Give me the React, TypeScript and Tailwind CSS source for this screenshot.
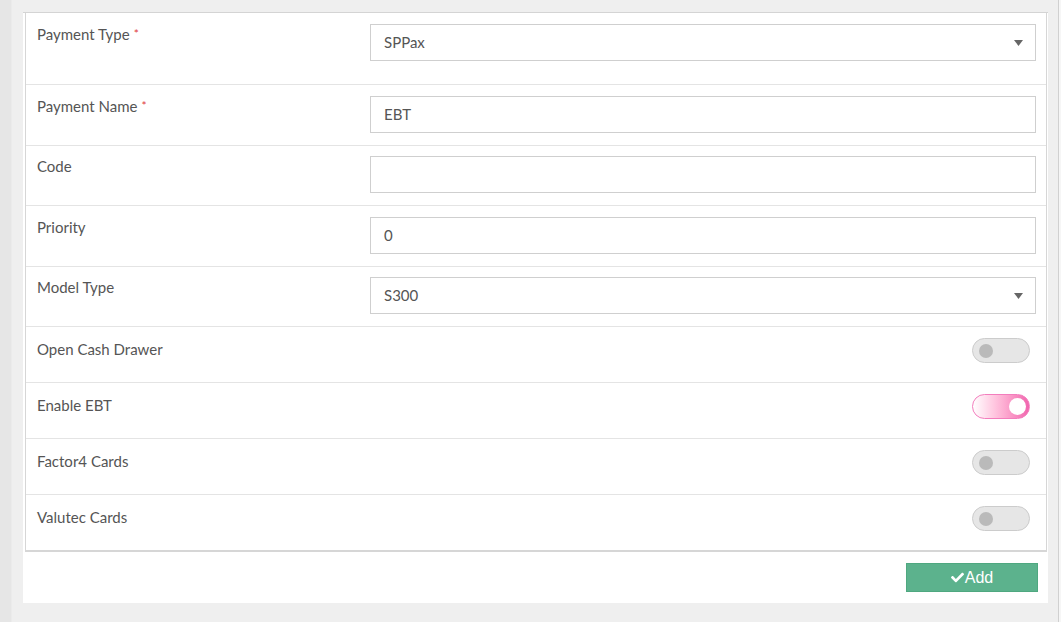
import { FaCheck } from 'react-icons/fa';

type FieldRow = {
  label: string;
  required?: boolean;
  value: string;
  select?: boolean;
  height: string;
  top: string;
};

const fieldRows: FieldRow[] = [
  { label: 'Payment Type', required: true, value: 'SPPax', select: true, height: 'h-[72px]', top: 'pt-[11px]' },
  { label: 'Payment Name', required: true, value: 'EBT', height: 'h-[61px]', top: 'pt-[11px]' },
  { label: 'Code', value: '', height: 'h-[60px]', top: 'pt-[10px]' },
  { label: 'Priority', value: '0', height: 'h-[61px]', top: 'pt-[11px]' },
  { label: 'Model Type', value: 'S300', select: true, height: 'h-[60px]', top: 'pt-[10px]' },
];

const toggleRows = [
  { label: 'Open Cash Drawer', on: false },
  { label: 'Enable EBT', on: true },
  { label: 'Factor4 Cards', on: false },
  { label: 'Valutec Cards', on: false },
];

function Toggle({ on }: { on: boolean }) {
  if (on) {
    return (
      <div className="w-[58px] h-[25px] rounded-full border border-[#f37dbd] bg-gradient-to-r from-white to-[#f064ae] flex items-center justify-end pr-[3px]">
        <div className="w-[17px] h-[17px] rounded-full bg-white" />
      </div>
    );
  }
  return (
    <div className="w-[58px] h-[25px] rounded-full border border-[#cccccc] bg-[#e6e6e6] flex items-center pl-[6px]">
      <div className="w-[14px] h-[14px] rounded-full bg-[#bababa]" />
    </div>
  );
}

export default function App() {
  return (
    <div
      className="w-[1061px] h-[622px] bg-[#efefef] flex text-[#555555]"
      style={{ fontFamily: 'Lato, "Open Sans", sans-serif' }}
    >
      <div className="w-[12px] h-full bg-[#e6e6e6] border-r border-[#ebebeb]" />
      <div className="w-[11px]" />
      <div className="mt-[12px] w-[1025px] h-[591px] bg-white border-t border-[#d4d4d4] flex flex-col">
        <div className="ml-[2px] w-[1022px] border-l border-r border-b-2 border-[#d6d6d6]">
          {fieldRows.map((row) => (
            <div
              key={row.label}
              className={`${row.height} ${row.top} flex border-b border-[#e4e4e4] pl-[11px]`}
            >
              <div className="w-[333px] text-[15px] leading-[22px] -mt-[1px]">
                {row.label}
                {row.required && <span className="text-[#e03a3a] text-[12px] align-top ml-[4px]">*</span>}
              </div>
              <div className="w-[666px] h-[37px] border border-[#cfcfcf] flex items-center justify-between pl-[13px] pr-[12px] text-[15px]">
                <span>{row.value}</span>
                {row.select && (
                  <svg width="9" height="6" viewBox="0 0 9 6">
                    <path d="M0 0 L9 0 L4.5 6 Z" fill="#666666" />
                  </svg>
                )}
              </div>
            </div>
          ))}
          {toggleRows.map((row, i) => (
            <div
              key={row.label}
              className={`${i === 3 ? 'h-[55px]' : 'h-[56px] border-b border-[#e4e4e4]'} flex items-start justify-between pt-[11px] pl-[11px] pr-[16px]`}
            >
              <div className="text-[15px] leading-[22px]">{row.label}</div>
              <Toggle on={row.on} />
            </div>
          ))}
        </div>
        <div className="flex justify-end pt-[11px] pr-[10px]">
          <button
            className="w-[132px] h-[29px] bg-[#5cb28d] border border-[#4fa880] text-white text-[16px] flex items-center justify-center"
            style={{ fontFamily: '"Liberation Sans", Arial, sans-serif' }}
          >
            <FaCheck size={13} className="mr-[1px]" />
            Add
          </button>
        </div>
      </div>
      <div className="w-[10px]" />
      <div className="w-[1px] h-full bg-[#d0d0d0]" />
      <div className="flex-1 bg-[#f6f6f6]" />
    </div>
  );
}
